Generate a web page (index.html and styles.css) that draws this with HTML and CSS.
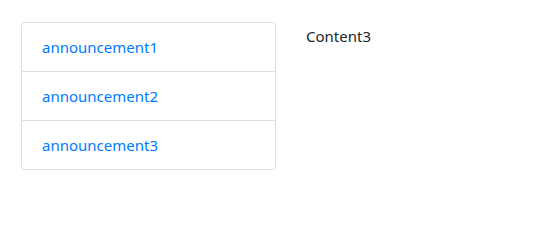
FILE: index.html
```html
<!DOCTYPE html>
<html>
<head>
<meta charset="utf-8">
<link rel="stylesheet" href="styles.css">
</head>
<body>
<div class="row">
  <div class="list-group">
    <a class="list-item" href="#">announcement1</a>
    <a class="list-item" href="#">announcement2</a>
    <a class="list-item" href="#">announcement3</a>
  </div>
  <div class="content">Content3</div>
</div>
</body>
</html>
```
FILE: styles.css
```css
html, body {
  margin: 0;
  background: #fff;
}
body {
  font-family: "Noto Sans", "Open Sans", sans-serif;
  font-size: 15px;
  line-height: 24px;
  color: #212529;
  padding: 22px 21px;
}
.row {
  display: flex;
  gap: 30px;
  align-items: flex-start;
}
.list-group {
  width: 253px;
  border: 1px solid rgba(0,0,0,.125);
  border-radius: 4px;
  display: flex;
  flex-direction: column;
}
.list-item {
  display: block;
  padding: 12px 20px;
  color: #007bff;
  text-decoration: none;
  border-top: 1px solid rgba(0,0,0,.125);
}
.list-item:first-child {
  border-top: none;
}
.content {
  padding-top: 2px;
}
```
